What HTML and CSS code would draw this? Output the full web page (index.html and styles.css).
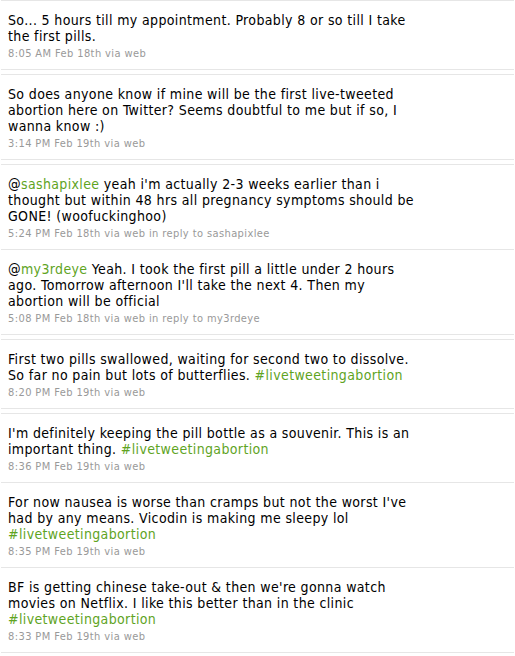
FILE: index.html
```html
<!DOCTYPE html>
<html>
<head>
<meta charset="utf-8">
<link rel="stylesheet" href="styles.css">
</head>
<body>
<ol class="timeline">
  <li class="tweet">
    <p class="text">So... 5 hours till my appointment. Probably 8 or so till I take<br>the first pills.</p>
    <p class="meta">8:05 AM Feb 18th via web</p>
  </li>
  <li class="tweet">
    <p class="text">So does anyone know if mine will be the first live-tweeted<br>abortion here on Twitter? Seems doubtful to me but if so, I<br>wanna know :)</p>
    <p class="meta">3:14 PM Feb 19th via web</p>
  </li>
  <li class="tweet">
    <p class="text">@<a class="link">sashapixlee</a> yeah i'm actually 2-3 weeks earlier than i<br>thought but within 48 hrs all pregnancy symptoms should be<br>GONE! (woofuckinghoo)</p>
    <p class="meta">5:24 PM Feb 18th via web in reply to sashapixlee</p>
  </li>
  <li class="tweet cont">
    <p class="text">@<a class="link">my3rdeye</a> Yeah. I took the first pill a little under 2 hours<br>ago. Tomorrow afternoon I'll take the next 4. Then my<br>abortion will be official</p>
    <p class="meta">5:08 PM Feb 18th via web in reply to my3rdeye</p>
  </li>
  <li class="tweet">
    <p class="text">First two pills swallowed, waiting for second two to dissolve.<br>So far no pain but lots of butterflies. <a class="link">#livetweetingabortion</a></p>
    <p class="meta">8:20 PM Feb 19th via web</p>
  </li>
  <li class="tweet">
    <p class="text">I'm definitely keeping the pill bottle as a souvenir. This is an<br>important thing. <a class="link">#livetweetingabortion</a></p>
    <p class="meta">8:36 PM Feb 19th via web</p>
  </li>
  <li class="tweet cont">
    <p class="text">For now nausea is worse than cramps but not the worst I've<br>had by any means. Vicodin is making me sleepy lol<br><a class="link">#livetweetingabortion</a></p>
    <p class="meta">8:35 PM Feb 19th via web</p>
  </li>
  <li class="tweet cont">
    <p class="text">BF is getting chinese take-out &amp; then we're gonna watch<br>movies on Netflix. I like this better than in the clinic<br><a class="link">#livetweetingabortion</a></p>
    <p class="meta">8:33 PM Feb 19th via web</p>
  </li>
</ol>
</body>
</html>
```

FILE: styles.css
```css
html, body {
  margin: 0;
  padding: 0;
  background: #ffffff;
}

body {
  font-family: "DejaVu Sans Condensed", "DejaVu Sans", sans-serif;
  font-stretch: condensed;
  color: #000000;
}

.timeline {
  list-style: none;
  margin: 0 1px;
  padding: 0;
  width: 513px;
}

.tweet {
  border-top: 1px solid #e6e6e6;
  border-bottom: 1px solid #e6e6e6;
  padding: 11px 7px 8px;
  margin-top: 4px;
}

.tweet:first-child {
  margin-top: 0;
}

.tweet.cont {
  border-top: none;
  margin-top: 0;
}

.text {
  margin: 0;
  font-size: 14px;
  line-height: 16px;
  letter-spacing: 0.36px;
  white-space: nowrap;
}

.meta {
  margin: 3px 0 0;
  font-size: 11px;
  line-height: 14px;
  letter-spacing: 0.4px;
  color: #999999;
  white-space: nowrap;
}

.link {
  color: #5fa41f;
  text-decoration: none;
}
```
